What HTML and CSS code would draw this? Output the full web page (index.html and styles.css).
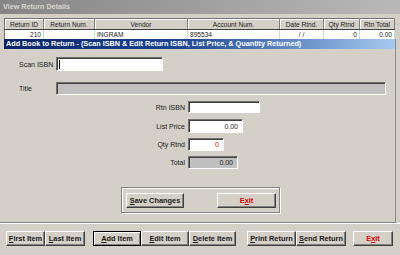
FILE: index.html
```html
<!DOCTYPE html>
<html lang="en">
<head>
  <meta charset="UTF-8">
  <title>View Return Details</title>
  <link rel="stylesheet" href="styles.css">
</head>
<body>
<div class="window">
  <div class="titlebar">View Return Details</div>

  <table class="returns">
    <tr>
      <th class="col-id">Return ID</th>
      <th class="col-num">Return Num.</th>
      <th class="col-vendor">Vendor</th>
      <th class="col-acct">Account Num.</th>
      <th class="col-date">Date Rtnd.</th>
      <th class="col-qty">Qty Rtnd</th>
      <th class="col-total">Rtn Total</th>
    </tr>
    <tr>
      <td class="num">210</td>
      <td></td>
      <td>INGRAM</td>
      <td>895534</td>
      <td class="center">/ /</td>
      <td class="num">0</td>
      <td class="num">0.00</td>
    </tr>
  </table>

  <div class="form-area">
    <div class="band">Add Book to Return - (Scan ISBN &amp; Edit Return ISBN, List Price, &amp; Quantity Returned)</div>

    <div class="row row-scan">
      <label class="lbl-left">Scan ISBN</label>
      <div class="field white w-scan"><span class="caret"></span></div>
    </div>

    <div class="row row-title">
      <label class="lbl-left">Title</label>
      <div class="field grey w-title"></div>
    </div>

    <div class="row row-isbn">
      <label class="lbl-right">Rtn ISBN</label>
      <div class="field white w-isbn"></div>
    </div>

    <div class="row row-price">
      <label class="lbl-right">List Price</label>
      <div class="field white w-price num">0.00</div>
    </div>

    <div class="row row-qty">
      <label class="lbl-right">Qty Rtnd</label>
      <div class="field white w-qty num red">0</div>
    </div>

    <div class="row row-total">
      <label class="lbl-right">Total</label>
      <div class="field grey w-total num">0.00</div>
    </div>

    <div class="panel">
      <button class="btn w-save"><u>S</u>ave Changes</button>
      <button class="btn w-exit red">E<u>x</u>it</button>
    </div>
  </div>

  <div class="toolbar">
    <div class="group">
      <button class="btn w-39"><u>F</u>irst Item</button>
      <button class="btn w-40"><u>L</u>ast Item</button>
    </div>
    <div class="group">
      <button class="btn w-48 default"><u>A</u>dd Item</button>
      <button class="btn w-48"><u>E</u>dit Item</button>
      <button class="btn w-47"><u>D</u>elete Item</button>
    </div>
    <div class="group">
      <button class="btn w-49"><u>P</u>rint Return</button>
      <button class="btn w-50"><u>S</u>end Return</button>
    </div>
    <div class="group">
      <button class="btn w-40 red">E<u>x</u>it</button>
    </div>
  </div>
</div>
</body>
</html>
```

FILE: styles.css
```css
body {
  margin: 0;
  background: #d4d0c8;
  font-family: "Liberation Sans", Arial, sans-serif;
  font-size: 7px;
  color: #1a1a1a;
}
.window {
  width: 400px;
  height: 255px;
  overflow: hidden;
}
.titlebar {
  height: 14px;
  line-height: 14px;
  padding-left: 3px;
  background: linear-gradient(to right, #858585, #b9b9b9);
  color: #d8d5cf;
  font-weight: bold;
  font-size: 7.2px;
}

/* grid of returns */
.returns {
  margin: 4px 0 0 4px;
  width: 391px;
  border-collapse: collapse;
  table-layout: fixed;
  border-top: 1px solid #707070;
  border-left: 1px solid #707070;
}
.returns th {
  height: 10px;
  padding: 0;
  background: #d4d0c8;
  font-weight: normal;
  font-size: 6.6px;
  border-right: 1px solid #808080;
  border-bottom: 1px solid #404040;
  box-shadow: inset 1px 1px #fff;
}
.returns td {
  height: 9px;
  padding: 0 2px;
  background: #fff;
  font-size: 6.6px;
  border-right: 1px solid #bfe8bf;
  white-space: nowrap;
}
.col-id { width: 38px; }
.col-num { width: 50px; }
.col-vendor { width: 92px; }
.col-acct { width: 91px; }
.col-date { width: 43px; }
.col-qty { width: 35px; }
.returns .num { text-align: right; }
.returns .center { text-align: center; }

/* form */
.form-area {
  width: 396px;
  height: 184px;
  border-right: 1px solid #8a8a8a;
  border-bottom: 1px solid #808080;
  box-sizing: border-box;
}
.band {
  margin-left: 4px;
  height: 10px;
  line-height: 10px;
  padding-left: 2px;
  background: linear-gradient(to right, #0a246a 0%, #1b4592 45%, #a6caf0 100%);
  color: #fff;
  font-weight: bold;
  font-size: 7.25px;
  white-space: nowrap;
}
.row {
  display: flex;
  align-items: center;
}
.row-scan { margin-top: 8px; height: 14px; }
.row-title { margin-top: 11px; height: 13px; }
.row-isbn { margin-top: 6px; height: 12px; }
.row-price { margin-top: 6px; height: 14px; }
.row-qty { margin-top: 5px; height: 13px; }
.row-total { margin-top: 5px; height: 13px; }

.lbl-left {
  width: 37px;
  padding-left: 19px;
}
.lbl-right {
  width: 185px;
  padding-right: 3px;
  text-align: right;
}
.field {
  height: 100%;
  box-sizing: border-box;
  border-top: 1px solid #707070;
  border-left: 1px solid #707070;
  border-right: 1px solid #fff;
  border-bottom: 1px solid #fff;
  box-shadow: inset 1px 1px #404040;
  padding: 0 4px 0 2px;
  display: flex;
  align-items: center;
}
.field.num { justify-content: flex-end; }
.white { background: #fff; }
.grey { background: #c0c0c0; }
.red { color: #e00000; }
.caret {
  width: 1px;
  height: 9px;
  background: #000;
}
.w-scan { width: 107px; }
.w-title { width: 330px; }
.w-isbn { width: 72px; }
.w-price { width: 55px; }
.w-qty { width: 36px; }
.w-total { width: 50px; }

.panel {
  margin: 18px 0 0 121px;
  width: 159px;
  height: 26px;
  box-sizing: border-box;
  border: 1px solid #808080;
  box-shadow: inset 1px 1px #fff, 1px 1px #fff;
  display: flex;
  align-items: center;
  justify-content: space-between;
  padding: 0 3px 0 4px;
}

/* buttons */
.btn {
  height: 15px;
  padding: 0;
  margin: 0;
  background: #d4d0c8;
  font-family: "Liberation Sans", Arial, sans-serif;
  font-size: 7.4px;
  font-weight: bold;
  color: #1a1a1a;
  border: 1px solid;
  border-color: #fff #404040 #404040 #fff;
  box-shadow: inset -1px -1px #808080;
  white-space: nowrap;
}
.btn.red { color: #e00000; }
.btn.default {
  border-color: #000;
  box-shadow: inset 1px 1px #fff, inset -1px -1px #808080;
}
.w-save { width: 58px; }
.w-exit { width: 59px; }
.w-39 { width: 39px; }
.w-40 { width: 40px; }
.w-47 { width: 47px; }
.w-48 { width: 48px; }
.w-49 { width: 49px; }
.w-50 { width: 50px; }

.toolbar {
  display: flex;
  border-top: 1px solid #fff;
  padding: 7px 0 0 6px;
}
.group { display: flex; }
.group + .group { margin-left: 8px; }
.group:nth-child(3) { margin-left: 11px; }
.group:nth-child(4) { margin-left: 7px; }
```
